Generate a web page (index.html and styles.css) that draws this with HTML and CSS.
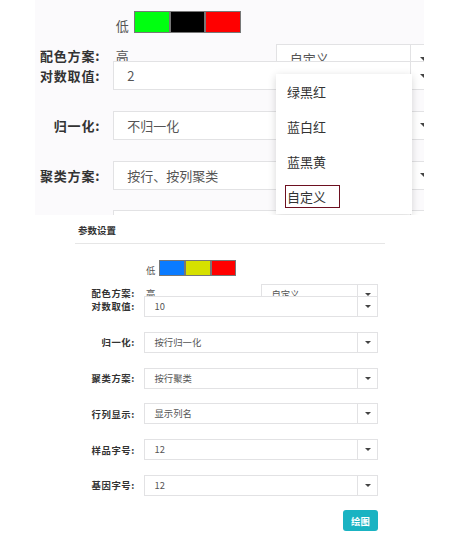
FILE: index.html
```html
<!DOCTYPE html>
<html>
<head>
<meta charset="utf-8">
<title>参数设置</title>
<link rel="stylesheet" href="styles.css">
</head>
<body>

	<div class="zoom">
		<div class="form big">
			<div class="swatches">
				<span class="low">低</span>
				<span class="sw green"></span><span class="sw black"></span><span class="sw red"></span>
			</div>
			<div class="row row-color">
				<label class="lbl">配色方案:</label>
				<span class="high">高</span>
				<div class="select select-scheme"><span class="val">自定义</span><span class="caret-box"><i class="caret"></i></span></div>
			</div>
			<div class="row row-front">
				<label class="lbl">对数取值:</label>
				<div class="select"><span class="val">2</span><span class="caret-box"><i class="caret"></i></span></div>
			</div>
			<div class="row">
				<label class="lbl">归一化:</label>
				<div class="select"><span class="val">不归一化</span><span class="caret-box"><i class="caret"></i></span></div>
			</div>
			<div class="row">
				<label class="lbl">聚类方案:</label>
				<div class="select"><span class="val">按行、按列聚类</span><span class="caret-box"><i class="caret"></i></span></div>
			</div>
			<!-- cut by the capture edge: only the box top shows -->
			<div class="row">
				<span class="lbl"></span>
				<div class="select"><span class="val"></span><span class="caret-box"></span></div>
			</div>
		</div>
		<ul class="dropdown">
			<li>绿黑红</li>
			<li>蓝白红</li>
			<li>蓝黑黄</li>
			<li><span class="picked">自定义</span></li>
		</ul>
	</div>

	<div class="panel">
		<div class="panel-title">参数设置</div>
		<div class="form small">
			<div class="swatches">
				<span class="low">低</span>
				<span class="sw blue"></span><span class="sw yellow"></span><span class="sw red"></span>
			</div>
			<div class="row row-color">
				<label class="lbl">配色方案:</label>
				<span class="high">高</span>
				<div class="select select-scheme"><span class="val">自定义</span><span class="caret-box"><i class="caret"></i></span></div>
			</div>
			<div class="row row-front">
				<label class="lbl">对数取值:</label>
				<div class="select"><span class="val">10</span><span class="caret-box"><i class="caret"></i></span></div>
			</div>
			<div class="row">
				<label class="lbl">归一化:</label>
				<div class="select"><span class="val">按行归一化</span><span class="caret-box"><i class="caret"></i></span></div>
			</div>
			<div class="row">
				<label class="lbl">聚类方案:</label>
				<div class="select"><span class="val">按行聚类</span><span class="caret-box"><i class="caret"></i></span></div>
			</div>
			<div class="row">
				<label class="lbl">行列显示:</label>
				<div class="select"><span class="val">显示列名</span><span class="caret-box"><i class="caret"></i></span></div>
			</div>
			<div class="row">
				<label class="lbl">样品字号:</label>
				<div class="select"><span class="val">12</span><span class="caret-box"><i class="caret"></i></span></div>
			</div>
			<div class="row">
				<label class="lbl">基因字号:</label>
				<div class="select"><span class="val">12</span><span class="caret-box"><i class="caret"></i></span></div>
			</div>
			<div class="actions">
				<button type="button" class="btn-draw">绘图</button>
			</div>
		</div>
	</div>

</body>
</html>
```

FILE: styles.css
```css
body {
	margin: 0;
	background: #fff;
	font-family: "Noto Sans CJK SC", "Liberation Sans", sans-serif;
	color: #333;
}

/* enlarged capture with the colour list open */
.zoom {
	position: relative;
	margin-left: 35px;
	width: 389px;
	height: 215px;
	overflow: hidden;
	background: #fbfafc;
}

.form.big {
	font-size: 13px;
	margin-left: -18px;
	padding-top: 11px;
}

.form.small {
	font-size: 9.35px;
	padding-top: 16px;
}

.swatches {
	display: flex;
	align-items: flex-end;
	height: 1.7em;
	margin-bottom: 0.85em;
}

.low {
	width: 1.4em;
	margin-left: 7.6em;
	color: #555;
	line-height: 1.2em;
}

.sw {
	width: 2.75em;
	height: 1.7em;
	box-sizing: border-box;
	border: 1px solid #777;
}

.green { background: #00ff10; }
.black { background: #000; }
.red { background: #ff0000; }
.blue { background: #0a7bff; }
.yellow { background: #d6e000; }

.row {
	display: flex;
	align-items: center;
	height: 2.25em;
	margin-top: 1.58em;
}

.row-color {
	align-items: flex-start;
	height: 1.3em;
	margin-top: 0;
}

.row-front {
	position: relative;
	z-index: 1;
	margin-top: 0;
}

.lbl {
	width: 6.4em;
	flex-shrink: 0;
	text-align: right;
	font-weight: bold;
	letter-spacing: 0.06em;
	color: #333;
	white-space: nowrap;
}

.row-color .lbl,
.high {
	margin-top: 0.3em;
	line-height: 1.3em;
}

.high {
	width: 12.3em;
	flex-shrink: 0;
	margin-left: 1em;
	padding-left: 0.2em;
	color: #555;
}

.select {
	display: flex;
	width: 25em;
	height: 2.25em;
	margin-left: 1em;
	box-sizing: border-box;
	border: 1px solid #e2e2e4;
	background: #fff;
	flex-shrink: 0;
}

.select-scheme {
	width: 12.5em;
	margin-left: 0;
}

.val {
	flex: 1;
	padding-left: 1em;
	line-height: 2.1em;
	color: #555;
	white-space: nowrap;
}

.caret-box {
	display: flex;
	align-items: center;
	justify-content: center;
	width: 2em;
	border-left: 1px solid #e2e2e4;
}

.caret {
	width: 0;
	height: 0;
	border-left: 0.33em solid transparent;
	border-right: 0.33em solid transparent;
	border-top: 0.36em solid #444;
}

.dropdown {
	position: absolute;
	left: 241px;
	top: 74px;
	z-index: 2;
	width: 136px;
	margin: 0;
	padding: 0;
	list-style: none;
	background: #fff;
	box-shadow: 0 2px 8px rgba(0, 0, 0, 0.16);
	font-size: 13px;
	color: #333;
}

.dropdown li {
	height: 35px;
	line-height: 35px;
	padding-left: 11px;
}

.picked {
	display: inline-block;
	height: 21px;
	line-height: 21px;
	padding: 0 13px 0 1px;
	margin-left: -2px;
	border: 1px solid #6d1020;
}

/* panel at normal size */
.panel {
	margin-left: 75px;
	width: 310px;
}

.panel-title {
	padding: 9px 0 0 3px;
	height: 19px;
	font-size: 9.5px;
	font-weight: bold;
	line-height: 12px;
	color: #333;
	border-bottom: 1px solid #e6e6e6;
}

.actions {
	display: flex;
	justify-content: flex-end;
	width: 32.4em;
	margin-top: 1.5em;
}

.btn-draw {
	width: 3.75em;
	height: 2.25em;
	padding: 0;
	border: none;
	border-radius: 3px;
	background: #1ab3c2;
	color: #fff;
	font-family: inherit;
	font-size: 1em;
	font-weight: bold;
}
```
